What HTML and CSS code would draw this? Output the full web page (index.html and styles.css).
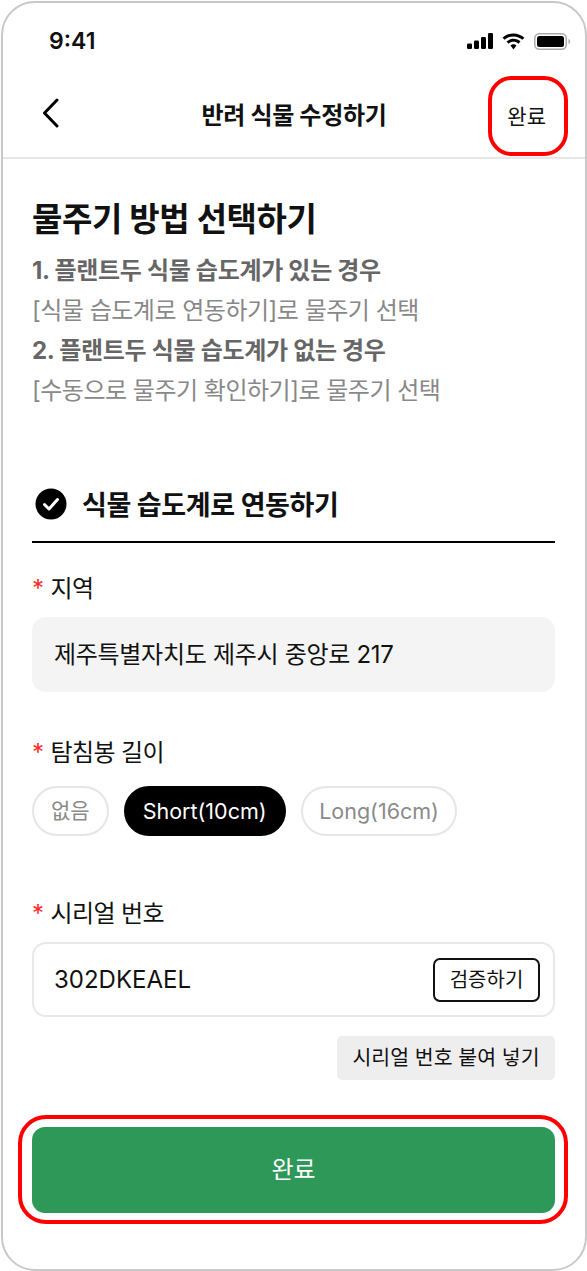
FILE: index.html
```html
<!DOCTYPE html>
<html lang="ko">

<head>
    <title>반려 식물 수정하기</title>
    <link rel="stylesheet" href="styles.css">
</head>

<body>
    <div class="phone">
        <div class="statusBar">
            <span class="time">9:41</span>
            <div class="statusIcons">
                <svg width="26" height="16" viewBox="0 0 26 16">
                    <rect x="0" y="10.500" width="5" height="5.500" rx="1.300" />
                    <rect x="7" y="7.500" width="5" height="8.500" rx="1.300" />
                    <rect x="14" y="4" width="5" height="12" rx="1.300" />
                    <rect x="21" y="0" width="5" height="16" rx="1.300" />
                </svg>
                <svg width="23" height="17" viewBox="1 0 20 16" preserveAspectRatio="none">
                    <path d="M11 3.200c3 0 5.700 1.200 7.700 3.100l1.800-1.900C18 2 14.700.4 11 .4S4 2 1.500 4.400l1.800 1.900C5.300 4.400 8 3.200 11 3.200z" />
                    <path d="M11 8.300c1.600 0 3.100.6 4.200 1.700l1.900-1.900C15.500 6.500 13.400 5.500 11 5.500S6.500 6.500 4.900 8.100L6.800 10c1.100-1.100 2.600-1.700 4.200-1.700z" />
                    <path d="M11 10.700c-1 0-1.900.4-2.600 1L11 15.600l2.600-3.900c-.7-.6-1.600-1-2.600-1z" />
                </svg>
                <svg width="37" height="17" viewBox="0 0 37 17">
                    <rect x="0.750" y="0.750" width="31.500" height="15.500" rx="4.500" fill="none" stroke="#a9a9a9" stroke-width="1.500" />
                    <rect x="3" y="3" width="27" height="11" rx="2.500" />
                    <path d="M34.500 6v5c1-.3 1.700-1.300 1.700-2.500S35.500 6.300 34.500 6z" fill="#a9a9a9" />
                </svg>
            </div>
        </div>

        <div class="header">
            <svg class="backIcon" width="18" height="30" viewBox="0 0 18 30">
                <path d="M15 2 L2.500 15 L15 28" />
            </svg>
            <div class="headerTitle">반려 식물 수정하기</div>
            <div class="headerDone">완료</div>
        </div>
        <div class="headerHighlight"></div>

        <div class="content">
            <h1 class="pageTitle">물주기 방법 선택하기</h1>
            <div class="guide">
                <p class="guideStrong">1. 플랜트두 식물 습도계가 있는 경우</p>
                <p>[식물 습도계로 연동하기]로 물주기 선택</p>
                <p class="guideStrong">2. 플랜트두 식물 습도계가 없는 경우</p>
                <p>[수동으로 물주기 확인하기]로 물주기 선택</p>
            </div>

            <div class="sectionTitle">
                <svg width="32" height="32" viewBox="0 0 32 32">
                    <circle cx="16" cy="16" r="15.500" fill="#000" />
                    <path d="M9.500 16.500 L14 21 L22.500 11.500" fill="none" stroke="#fff" stroke-width="3" stroke-linecap="round" stroke-linejoin="round" />
                </svg>
                <span>식물 습도계로 연동하기</span>
            </div>

            <div class="fieldLabel first"><span class="star">*</span>지역</div>
            <div class="regionBox">제주특별자치도 제주시 중앙로 217</div>

            <div class="fieldLabel probe"><span class="star">*</span>탐침봉 길이</div>
            <div class="chips">
                <div class="chip">없음</div>
                <div class="chip selected">Short(10cm)</div>
                <div class="chip">Long(16cm)</div>
            </div>

            <div class="fieldLabel serial"><span class="star">*</span>시리얼 번호</div>
            <div class="serialBox">
                <span>302DKEAEL</span>
                <div class="verifyButton">검증하기</div>
            </div>
            <div class="pasteRow">
                <div class="pasteButton">시리얼 번호 붙여 넣기</div>
            </div>

            <div class="doneWrap">
                <div class="doneButton">완료</div>
            </div>
        </div>
    </div>
</body>

</html>
```

FILE: styles.css
```css
html,
body {
    margin: 0;
    padding: 0;
    background-color: #ffffff;
}

body {
    width: 587px;
    height: 1271px;
    overflow: hidden;
    font-family: Inter, "Noto Sans CJK KR", sans-serif;
    color: #111111;
}

.phone {
    position: relative;
    box-sizing: border-box;
    width: 586px;
    height: 1270px;
    margin: 1px 0 0 1px;
    border: 2px solid #c8c8c8;
    border-radius: 34px;
    background-color: #ffffff;
}

.statusBar {
    display: flex;
    justify-content: space-between;
    align-items: center;
    height: 76px;
    box-sizing: border-box;
    padding: 0 14px 0 46px;
}

.time {
    font-size: 23px;
    font-weight: 600;
}

.statusIcons {
    display: flex;
    align-items: center;
    gap: 9px;
}

.header {
    display: flex;
    align-items: center;
    justify-content: center;
    position: relative;
    box-sizing: content-box;
    height: 69px;
    padding-bottom: 9px;
    border-bottom: 2px solid #e6e6e6;
}

.backIcon {
    position: absolute;
    left: 39px;
    top: 19px;
}

.backIcon path {
    fill: none;
    stroke: #000000;
    stroke-width: 3;
    stroke-linecap: round;
    stroke-linejoin: round;
}

.headerTitle {
    font-size: 24px;
    font-weight: 700;
    letter-spacing: -0.3px;
}

.headerDone {
    position: absolute;
    right: 39px;
    top: 21px;
    font-size: 21px;
}

.headerHighlight {
    position: absolute;
    left: 485px;
    top: 73px;
    width: 80px;
    height: 80px;
    box-sizing: border-box;
    border: 4px solid #ff0000;
    border-radius: 24px;
}

.content {
    padding: 0 30px 0 29px;
}

.pageTitle {
    margin: 38px 0 0 0;
    font-size: 33px;
    line-height: 44px;
    font-weight: 700;
    letter-spacing: -0.4px;
}

.guide {
    margin-top: 10px;
    font-size: 24px;
    color: #888888;
    letter-spacing: -0.5px;
}

.guide p {
    margin: 0;
    line-height: 40px;
}

.guide .guideStrong {
    font-weight: 700;
    color: #666666;
    letter-spacing: -0.3px;
}

.sectionTitle {
    display: flex;
    align-items: center;
    gap: 15px;
    margin-top: 73px;
    padding: 0 0 18px 3px;
    border-bottom: 2px solid #000000;
    font-size: 27px;
    font-weight: 700;
    letter-spacing: -0.4px;
}

.fieldLabel {
    font-size: 24px;
    line-height: 32px;
    letter-spacing: -0.6px;
}

.fieldLabel.first {
    margin-top: 30px;
}

.fieldLabel.probe {
    margin-top: 45px;
}

.fieldLabel.serial {
    margin-top: 62px;
}

.star {
    color: #ff2a2a;
    margin-right: 7px;
}

.regionBox {
    margin-top: 12px;
    height: 75px;
    line-height: 76px;
    padding-left: 22px;
    background-color: #f4f4f4;
    border-radius: 14px;
    font-size: 24px;
    letter-spacing: -0.3px;
}

.chips {
    display: flex;
    gap: 15px;
    margin-top: 17px;
}

.chip {
    box-sizing: border-box;
    height: 50px;
    line-height: 46px;
    padding: 0 17px;
    border: 2px solid #e6e6e6;
    border-radius: 25px;
    font-size: 21.500px;
    color: #8a8a8a;
}

.chip:first-child {
    font-size: 21px;
}

.chip.selected {
    background-color: #000000;
    border-color: #000000;
    color: #ffffff;
}

.chip:last-child {
    padding: 0 16.500px;
}

.serialBox {
    display: flex;
    justify-content: space-between;
    align-items: center;
    box-sizing: border-box;
    margin-top: 12px;
    height: 75px;
    padding: 0 13px 0 20px;
    border: 2px solid #e9e9e9;
    border-radius: 14px;
    font-size: 24px;
}

.verifyButton {
    box-sizing: border-box;
    width: 107px;
    height: 44px;
    line-height: 40px;
    text-align: center;
    border: 2px solid #111111;
    border-radius: 7px;
    font-size: 20px;
}

.pasteRow {
    display: flex;
    justify-content: flex-end;
    margin-top: 19px;
}

.pasteButton {
    width: 218px;
    height: 44px;
    line-height: 44px;
    text-align: center;
    background-color: #eeeeee;
    border-radius: 5px;
    font-size: 20.500px;
}

.doneWrap {
    margin: 35px -13px 0 -14px;
    padding: 8px 9px 7px 10px;
    border: 4px solid #ff0000;
    border-radius: 28px;
}

.doneButton {
    height: 86px;
    line-height: 86px;
    text-align: center;
    background-color: #2e9859;
    border-radius: 13px;
    color: #ffffff;
    font-size: 24px;
}
```
